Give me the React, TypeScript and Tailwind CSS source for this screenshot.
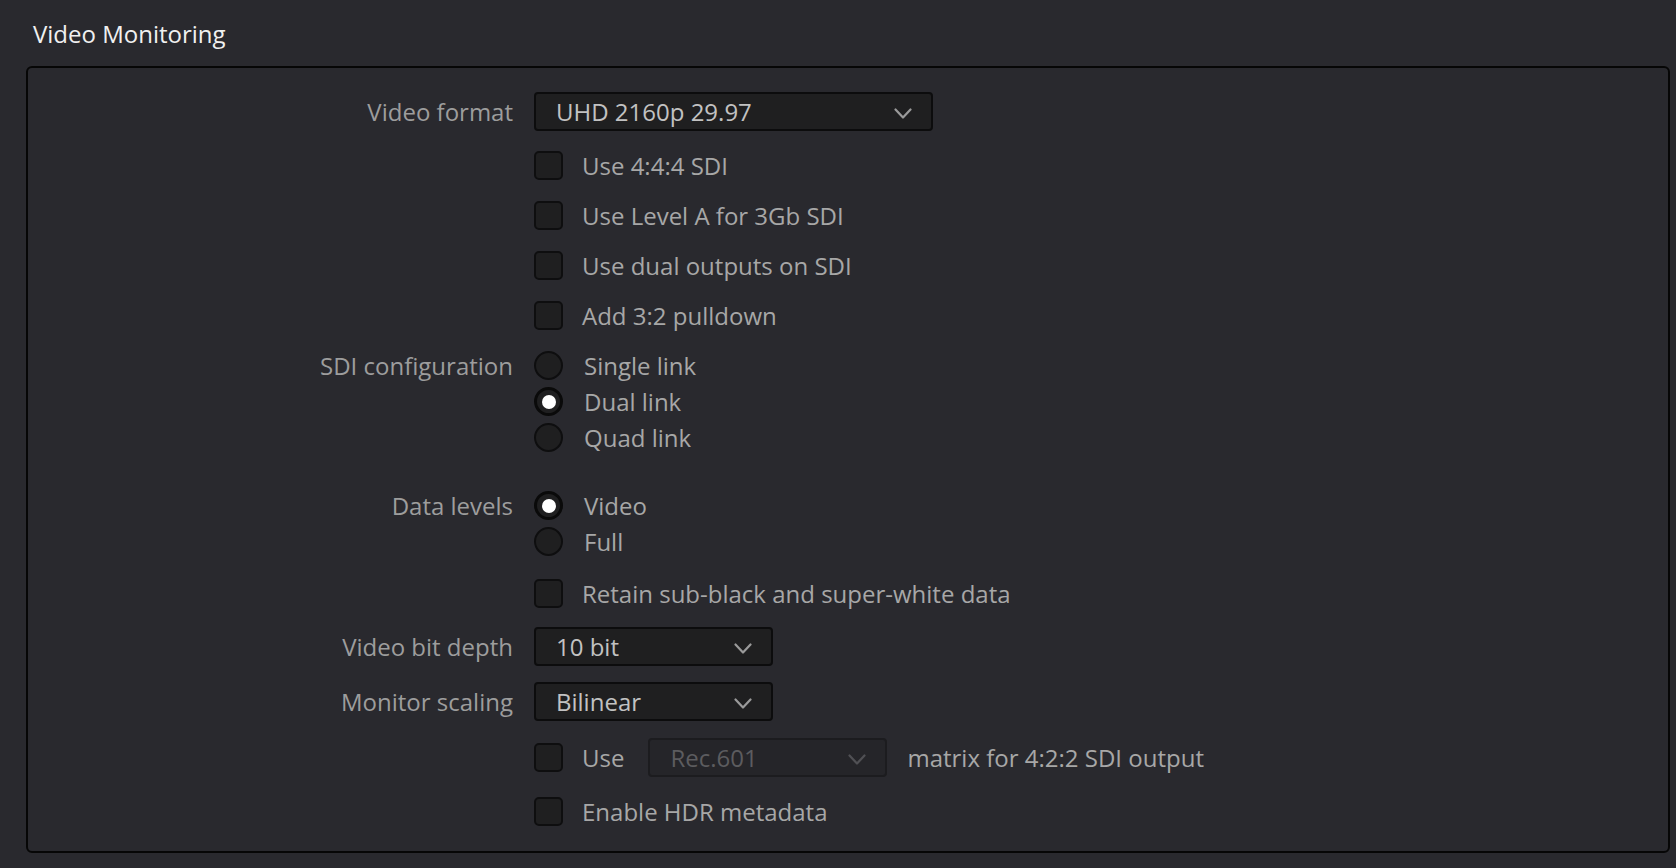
import React from "react";

const labelCls = "text-[24px] leading-[32px] text-[#9d9d9d] whitespace-nowrap";
const optionCls = "text-[24px] leading-[32px] text-[#a7a7a7] whitespace-nowrap";

function Chevron({ dim = false }: { dim?: boolean }) {
  return (
    <svg width="18" height="11" viewBox="0 0 18 11" className="mt-[4px] shrink-0">
      <polyline
        points="1.5,1.5 9,9.5 16.5,1.5"
        fill="none"
        stroke={dim ? "#505054" : "#9a9a9a"}
        strokeWidth="2.2"
        strokeLinecap="round"
        strokeLinejoin="round"
      />
    </svg>
  );
}

function Select({ value, wide = false, disabled = false }: { value: string; wide?: boolean; disabled?: boolean }) {
  return (
    <div
      className={`flex h-[39px] items-center justify-between rounded-[4px] border-2 pl-[20px] pr-[19px] ${
        wide ? "w-[399px]" : "w-[239px]"
      } ${disabled ? "border-[#1c1c1f] bg-[#252529] text-[#5c5c5f]" : "border-[#0c0c0d] bg-[#1f1f20] text-[#c2c2c2]"}`}
    >
      <span className="text-[24px] leading-[32px] whitespace-nowrap">{value}</span>
      <Chevron dim={disabled} />
    </div>
  );
}

function Checkbox() {
  return <div className="h-[29px] w-[29px] shrink-0 rounded-[5px] border-2 border-[#0e0e0f] bg-[#1f1f20]" />;
}

function Check({ text }: { text: string }) {
  return (
    <div className="flex h-[29px] items-center gap-[19px]">
      <Checkbox />
      <span className={optionCls}>{text}</span>
    </div>
  );
}

function Radio({ text, on = false }: { text: string; on?: boolean }) {
  return (
    <div className="flex h-[29px] items-center gap-[21px]">
      <div
        className={`flex h-[29px] w-[29px] shrink-0 items-center justify-center rounded-full bg-[#1f1f20] ${
          on ? "border-[3px] border-[#0a0a0a]" : "border-2 border-[#0e0e0f]"
        }`}
      >
        {on && <div className="h-[14px] w-[14px] rounded-full bg-white" />}
      </div>
      <span className={optionCls}>{text}</span>
    </div>
  );
}

function Row({
  label = "",
  tall = false,
  className = "",
  children,
}: {
  label?: string;
  tall?: boolean;
  className?: string;
  children: React.ReactNode;
}) {
  return (
    <div className={`flex gap-[21px] ${className}`}>
      <div className={`flex w-[485px] shrink-0 items-center justify-end ${tall ? "h-[39px]" : "h-[29px]"}`}>
        {label && <span className={labelCls}>{label}</span>}
      </div>
      <div className="flex flex-col">{children}</div>
    </div>
  );
}

export default function App() {
  return (
    <div className="min-h-screen w-full bg-[#29292e] font-['Open_Sans',sans-serif]">
      <div className="pl-[33px] pt-[18px] text-[24px] leading-[32px] text-[#f0f0f0]">Video Monitoring</div>

      <div className="ml-[26px] mr-[6px] mt-[16px] rounded-[6px] border-2 border-[#060606] bg-[#29292e] pb-[25px] pt-[24px]">
        <Row label="Video format" tall>
          <Select value="UHD 2160p 29.97" wide />
        </Row>

        <Row className="mt-[20px]">
          <Check text="Use 4:4:4 SDI" />
        </Row>
        <Row className="mt-[21px]">
          <Check text="Use Level A for 3Gb SDI" />
        </Row>
        <Row className="mt-[21px]">
          <Check text="Use dual outputs on SDI" />
        </Row>
        <Row className="mt-[21px]">
          <Check text="Add 3:2 pulldown" />
        </Row>

        <Row label="SDI configuration" className="mt-[21px]">
          <div className="flex flex-col gap-[7px]">
            <Radio text="Single link" />
            <Radio text="Dual link" on />
            <Radio text="Quad link" />
          </div>
        </Row>

        <Row label="Data levels" className="mt-[39px]">
          <div className="flex flex-col gap-[7px]">
            <Radio text="Video" on />
            <Radio text="Full" />
          </div>
        </Row>

        <Row className="mt-[23px]">
          <Check text="Retain sub-black and super-white data" />
        </Row>

        <Row label="Video bit depth" tall className="mt-[19px]">
          <Select value="10 bit" />
        </Row>

        <Row label="Monitor scaling" tall className="mt-[16px]">
          <Select value="Bilinear" />
        </Row>

        <Row tall className="mt-[17px]">
          <div className="flex h-[39px] items-center">
            <Checkbox />
            <span className={`ml-[19px] ${optionCls}`}>Use</span>
            <div className="ml-[24px]">
              <Select value="Rec.601" disabled />
            </div>
            <span className={`ml-[20px] ${optionCls}`}>matrix for 4:2:2 SDI output</span>
          </div>
        </Row>

        <Row className="mt-[20px]">
          <Check text="Enable HDR metadata" />
        </Row>
      </div>
    </div>
  );
}
